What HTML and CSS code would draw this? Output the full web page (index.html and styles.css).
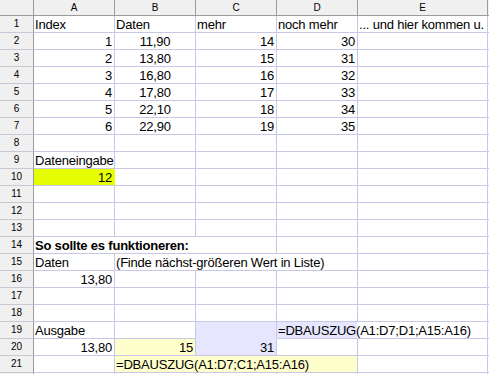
FILE: index.html
```html
<!DOCTYPE html>
<html lang="de">
<head>
<meta charset="utf-8">
<title>DBAUSZUG</title>
<link rel="stylesheet" href="styles.css">
</head>
<body>
<div class="sheet">
  <div class="corner"></div>
  <div class="colhead">A</div>
  <div class="colhead">B</div>
  <div class="colhead">C</div>
  <div class="colhead">D</div>
  <div class="colhead">E</div>
  <div class="colhead f"></div>

  <div class="rowhead">1</div>
  <div class="cell">Index</div>
  <div class="cell">Daten</div>
  <div class="cell">mehr</div>
  <div class="cell">noch mehr</div>
  <div class="cell">... und hier kommen u.</div>
  <div class="cell f"></div>

  <div class="rowhead">2</div>
  <div class="cell num">1</div>
  <div class="cell mid">11,90</div>
  <div class="cell num">14</div>
  <div class="cell num">30</div>
  <div class="cell"></div>
  <div class="cell f"></div>

  <div class="rowhead">3</div>
  <div class="cell num">2</div>
  <div class="cell mid">13,80</div>
  <div class="cell num">15</div>
  <div class="cell num">31</div>
  <div class="cell"></div>
  <div class="cell f"></div>

  <div class="rowhead">4</div>
  <div class="cell num">3</div>
  <div class="cell mid">16,80</div>
  <div class="cell num">16</div>
  <div class="cell num">32</div>
  <div class="cell"></div>
  <div class="cell f"></div>

  <div class="rowhead">5</div>
  <div class="cell num">4</div>
  <div class="cell mid">17,80</div>
  <div class="cell num">17</div>
  <div class="cell num">33</div>
  <div class="cell"></div>
  <div class="cell f"></div>

  <div class="rowhead">6</div>
  <div class="cell num">5</div>
  <div class="cell mid">22,10</div>
  <div class="cell num">18</div>
  <div class="cell num">34</div>
  <div class="cell"></div>
  <div class="cell f"></div>

  <div class="rowhead">7</div>
  <div class="cell num">6</div>
  <div class="cell mid">22,90</div>
  <div class="cell num">19</div>
  <div class="cell num">35</div>
  <div class="cell"></div>
  <div class="cell f"></div>

  <div class="rowhead">8</div>
  <div class="cell"></div><div class="cell"></div><div class="cell"></div><div class="cell"></div><div class="cell"></div><div class="cell f"></div>

  <div class="rowhead">9</div>
  <div class="cell">Dateneingabe</div>
  <div class="cell"></div><div class="cell"></div><div class="cell"></div><div class="cell"></div><div class="cell f"></div>

  <div class="rowhead">10</div>
  <div class="cell num input">12</div>
  <div class="cell"></div><div class="cell"></div><div class="cell"></div><div class="cell"></div><div class="cell f"></div>

  <div class="rowhead">11</div>
  <div class="cell"></div><div class="cell"></div><div class="cell"></div><div class="cell"></div><div class="cell"></div><div class="cell f"></div>

  <div class="rowhead">12</div>
  <div class="cell"></div><div class="cell"></div><div class="cell"></div><div class="cell"></div><div class="cell"></div><div class="cell f"></div>

  <div class="rowhead">13</div>
  <div class="cell"></div><div class="cell"></div><div class="cell"></div><div class="cell"></div><div class="cell"></div><div class="cell f"></div>

  <div class="rowhead">14</div>
  <div class="cell bold span3">So sollte es funktioneren:</div>
  <div class="cell"></div><div class="cell"></div><div class="cell f"></div>

  <div class="rowhead">15</div>
  <div class="cell">Daten</div>
  <div class="cell span3">(Finde nächst-größeren Wert in Liste)</div>
  <div class="cell"></div><div class="cell f"></div>

  <div class="rowhead">16</div>
  <div class="cell num">13,80</div>
  <div class="cell"></div><div class="cell"></div><div class="cell"></div><div class="cell"></div><div class="cell f"></div>

  <div class="rowhead">17</div>
  <div class="cell"></div><div class="cell"></div><div class="cell"></div><div class="cell"></div><div class="cell"></div><div class="cell f"></div>

  <div class="rowhead">18</div>
  <div class="cell"></div><div class="cell"></div><div class="cell"></div><div class="cell"></div><div class="cell"></div><div class="cell f"></div>

  <div class="rowhead">19</div>
  <div class="cell">Ausgabe</div>
  <div class="cell"></div>
  <div class="cell lav lav-top"></div>
  <div class="cell span2 lav-left">=DBAUSZUG(A1:D7;D1;A15:A16)</div>
  <div class="cell f"></div>

  <div class="rowhead">20</div>
  <div class="cell num">13,80</div>
  <div class="cell num pale">15</div>
  <div class="cell num lav">31</div>
  <div class="cell"></div><div class="cell"></div><div class="cell f"></div>

  <div class="rowhead">21</div>
  <div class="cell"></div>
  <div class="cell span3 pale">=DBAUSZUG(A1:D7;C1;A15:A16)</div>
  <div class="cell"></div><div class="cell f"></div>

  <div class="rowhead"></div>
  <div class="cell"></div><div class="cell"></div><div class="cell"></div><div class="cell"></div><div class="cell"></div><div class="cell f"></div>
</div>
</body>
</html>
```
FILE: styles.css
```css
html, body {
  margin: 0;
  padding: 0;
  background: #ffffff;
  overflow: hidden;
}

body {
  width: 489px;
  height: 374px;
  font-family: "Liberation Sans", Arial, sans-serif;
  font-size: 13px;
  color: #000000;
}

.sheet {
  display: grid;
  grid-template-columns: 34px 81px 81px 81px 81px 130px 1px;
  grid-template-rows: 16px repeat(22, 17px);
  width: 489px;
}

.corner,
.colhead,
.rowhead,
.cell {
  box-sizing: border-box;
  white-space: nowrap;
  overflow: hidden;
}

.corner {
  background: #f0f0f0;
  border-right: 1px solid #9c9c9c;
  border-bottom: 1px solid #9c9c9c;
}

.colhead {
  background: #f0f0f0;
  border-right: 1px solid #9c9c9c;
  border-bottom: 1px solid #9c9c9c;
  font-size: 10px;
  line-height: 15px;
  text-align: center;
}

.rowhead {
  background: #f0f0f0;
  border-right: 1px solid #9c9c9c;
  border-bottom: 1px solid #c9c9d6;
  font-size: 10px;
  line-height: 16px;
  text-align: center;
}

.cell {
  border-right: 1px solid #c8c8e6;
  border-bottom: 1px solid #c8c8e6;
  padding: 1px 1px 0 1px;
  line-height: 15px;
  letter-spacing: -0.2px;
}

.f {
  border-right: 0;
  padding: 0;
}

.num {
  text-align: right;
  padding-right: 2px;
}

.mid {
  text-align: center;
}

.bold {
  font-weight: bold;
}

.span2 {
  grid-column: span 2;
}

.span3 {
  grid-column: span 3;
}

.input {
  background: #e6ff00;
  border-right-color: #e6ff00;
}

.pale {
  background: #ffffcc;
}

.lav {
  background: #e6e6ff;
}

.lav-top {
  border-bottom-color: #e6e6ff;
}

.lav-left {
  background: linear-gradient(to right, #e6e6ff 80px, transparent 80px);
}
```
